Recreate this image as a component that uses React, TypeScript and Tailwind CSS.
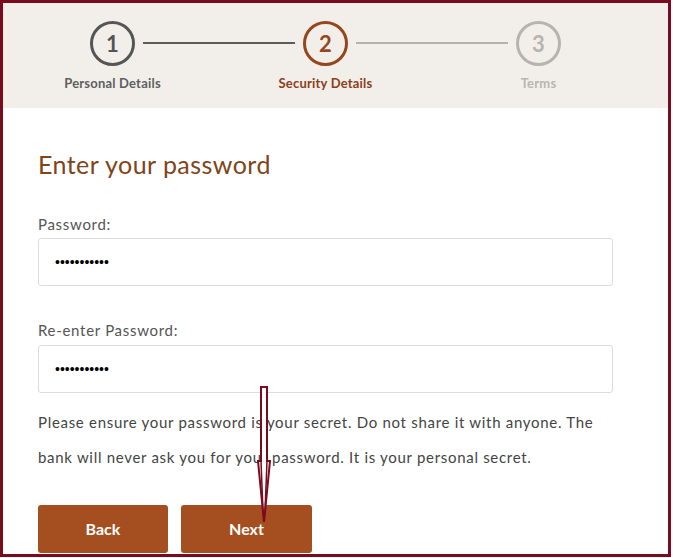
import React from "react";

const steps = [
  { n: 1, label: "Personal Details", state: "done" },
  { n: 2, label: "Security Details", state: "active" },
  { n: 3, label: "Terms", state: "todo" },
];

const circleStyle: Record<string, string> = {
  done: "border-[#555555] text-[#555555]",
  active: "border-[#94461c] text-[#94461c]",
  todo: "border-[#b7b4b0] text-[#b7b4b0]",
};

const labelStyle: Record<string, string> = {
  done: "text-[#5e5e5e]",
  active: "text-[#8b4019]",
  todo: "text-[#b8b5b1]",
};

const Step: React.FC<{ n: number; label: string; state: string }> = ({ n, label, state }) => (
  <div className="flex w-[45px] flex-col items-center">
    <div
      className={`flex h-[45px] w-[45px] items-center justify-center rounded-full border-[3px] text-[22px] font-bold ${circleStyle[state]}`}
    >
      {n}
    </div>
    <div
      className={`mt-[9px] whitespace-nowrap text-[13px] font-bold leading-[16px] tracking-[0.2px] ${labelStyle[state]}`}
    >
      {label}
    </div>
  </div>
);

export default function App() {
  return (
    <div className="bg-white" style={{ fontFamily: "Lato, 'Open Sans', sans-serif" }}>
      <div className="relative h-[557px] w-[671px] border-[3px] border-[#7a0a1d] bg-white">
        {/* stepper */}
        <div className="h-[105px] bg-[#f2efea] pl-[87px] pt-[18px]">
          <div className="flex items-start">
            <Step {...steps[0]} />
            <div className="mx-[8px] mt-[21px] h-[2px] w-[152px] bg-[#5b5b5b]" />
            <Step {...steps[1]} />
            <div className="mx-[8px] mt-[21px] h-[2px] w-[152px] bg-[#b5b2ae]" />
            <Step {...steps[2]} />
          </div>
        </div>

        {/* form */}
        <div className="w-[610px] pl-[35px]">
          <h1 className="mt-[41px] text-[25px] font-normal leading-[30px] tracking-[0.45px] text-[#804419]">
            Enter your password
          </h1>

          <label className="mt-[35px] block text-[15px] leading-[20px] tracking-[0.7px] text-[#555555]">
            Password:
          </label>
          <input
            type="password"
            readOnly
            value="abcdefghijk"
            className="mt-[4px] block h-[48px] w-[575px] rounded-[3px] border border-[#dcdcdc] px-[16px] text-[14px] text-black outline-none"
            style={{ fontFamily: "'Liberation Sans', sans-serif" }}
          />

          <label className="mt-[34px] block text-[15px] leading-[20px] tracking-[0.7px] text-[#555555]">
            Re-enter Password:
          </label>
          <input
            type="password"
            readOnly
            value="abcdefghijk"
            className="mt-[5px] block h-[48px] w-[575px] rounded-[3px] border border-[#dcdcdc] px-[16px] text-[14px] text-black outline-none"
            style={{ fontFamily: "'Liberation Sans', sans-serif" }}
          />

          <p className="mt-[12px] w-[575px] text-[15px] leading-[35px] tracking-[0.7px] text-[#444444]">
            Please ensure your password is your secret. Do not share it with anyone. The bank will never ask you
            for your password. It is your personal secret.
          </p>

          <div className="mt-[30px] flex gap-[13px]">
            <button className="h-[48px] w-[130px] rounded-[3px] bg-[#a54f20] text-[16px] font-bold text-white">
              Back
            </button>
            <button className="h-[48px] w-[131px] rounded-[3px] bg-[#a54f20] text-[16px] font-bold text-white">
              Next
            </button>
          </div>
        </div>

        {/* annotation arrow */}
        <svg
          className="absolute left-[253px] top-[381px]"
          width="16"
          height="142"
          viewBox="0 0 16 142"
        >
          <polygon
            points="5,3 11,3 11,77 14,77 8,138 2,77 5,77"
            fill="white"
            stroke="#7a0a1d"
            strokeWidth="2"
            strokeLinejoin="miter"
          />
          <polyline points="5,77 7,128" fill="none" stroke="#7a0a1d" strokeWidth="1.5" />
          <polyline points="11,77 9,128" fill="none" stroke="#7a0a1d" strokeWidth="1.5" />
        </svg>
      </div>
    </div>
  );
}
